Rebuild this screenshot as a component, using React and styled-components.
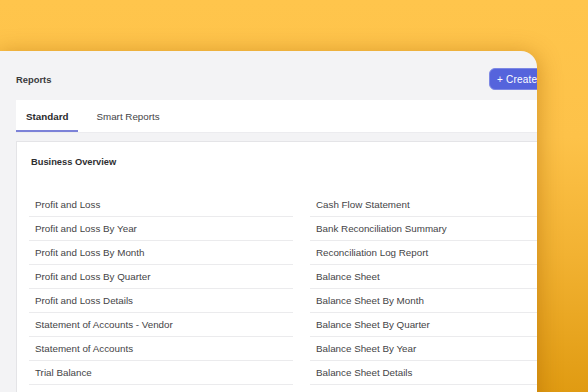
import React from "react";
import styled, { createGlobalStyle } from "styled-components";

const Global = createGlobalStyle`
  html, body { margin: 0; padding: 0; }
  body {
    width: 588px;
    height: 392px;
    overflow: hidden;
    font-family: "Liberation Sans", Arial, sans-serif;
    background: linear-gradient(180deg, #ffc54c 0%, #fdc249 35%, #f2b232 65%, #e09b12 100%);
  }
`;

const Stage = styled.div`
  padding-top: 51px;
  height: 392px;
  box-sizing: border-box;
`;

const Window = styled.div`
  width: 537px;
  height: 360px;
  background: #f3f3f5;
  border-top-right-radius: 16px;
  overflow: hidden;
  box-shadow: 0 4px 22px 2px rgba(165, 95, 0, 0.45);
`;

const Inner = styled.div`
  width: 567px;
`;

const Header = styled.div`
  display: flex;
  align-items: center;
  justify-content: space-between;
  padding: 17px 16px 0 16px;
  height: 22px;
`;

const Title = styled.div`
  font-size: 9.4px;
  font-weight: 700;
  color: #3a3a3c;
`;

const CreateButton = styled.button`
  width: 62px;
  height: 22px;
  border: 1px solid #7d88e4;
  border-radius: 6px;
  background: #5564dc;
  color: #ffffff;
  font-family: "Liberation Sans", Arial, sans-serif;
  font-size: 10px;
  text-align: left;
  padding: 0 0 0 7px;
  letter-spacing: 0.2px;
`;

const TabBar = styled.div`
  display: flex;
  gap: 8px;
  margin: 10px 16px 0 16px;
  height: 32px;
  background: #ffffff;
  border-bottom: 1px solid #ececef;
`;

const Tab = styled.div`
  display: flex;
  align-items: center;
  padding: 0 10px;
  font-size: 9.8px;
  font-weight: ${(p) => (p.$active ? 700 : 400)};
  color: ${(p) => (p.$active ? "#2a2a2c" : "#444446")};
  box-shadow: ${(p) => (p.$active ? "inset 0 -2px 0 #7c82d8" : "none")};
`;

const Card = styled.div`
  margin: 8px 16px 0 16px;
  background: #ffffff;
  border: 1px solid #e4e4e7;
  padding: 14px 0 0 12px;
  height: 260px;
`;

const CardTitle = styled.div`
  font-size: 9.3px;
  line-height: 12px;
  font-weight: 700;
  color: #2e2e30;
  padding-left: 2px;
  margin-bottom: 25px;
`;

const Columns = styled.div`
  display: grid;
  grid-template-columns: 264px 264px;
  column-gap: 17px;
`;

const List = styled.div`
  display: flex;
  flex-direction: column;
`;

const Row = styled.div`
  height: 23px;
  display: flex;
  align-items: center;
  padding-left: 6px;
  font-size: 9.8px;
  color: #444446;
  border-bottom: 1px solid #ebebed;
`;

const left = [
  "Profit and Loss",
  "Profit and Loss By Year",
  "Profit and Loss By Month",
  "Profit and Loss By Quarter",
  "Profit and Loss Details",
  "Statement of Accounts - Vendor",
  "Statement of Accounts",
  "Trial Balance",
  "Account Transactions",
];

const right = [
  "Cash Flow Statement",
  "Bank Reconciliation Summary",
  "Reconciliation Log Report",
  "Balance Sheet",
  "Balance Sheet By Month",
  "Balance Sheet By Quarter",
  "Balance Sheet By Year",
  "Balance Sheet Details",
  "General Ledger",
];

export default function App() {
  return (
    <>
      <Global />
      <Stage>
        <Window>
          <Inner>
            <Header>
              <Title>Reports</Title>
              <CreateButton>+ Create</CreateButton>
            </Header>
            <TabBar>
              <Tab $active>Standard</Tab>
              <Tab>Smart Reports</Tab>
            </TabBar>
            <Card>
              <CardTitle>Business Overview</CardTitle>
              <Columns>
                <List>
                  {left.map((t) => (
                    <Row key={t}>{t}</Row>
                  ))}
                </List>
                <List>
                  {right.map((t) => (
                    <Row key={t}>{t}</Row>
                  ))}
                </List>
              </Columns>
            </Card>
          </Inner>
        </Window>
      </Stage>
    </>
  );
}
